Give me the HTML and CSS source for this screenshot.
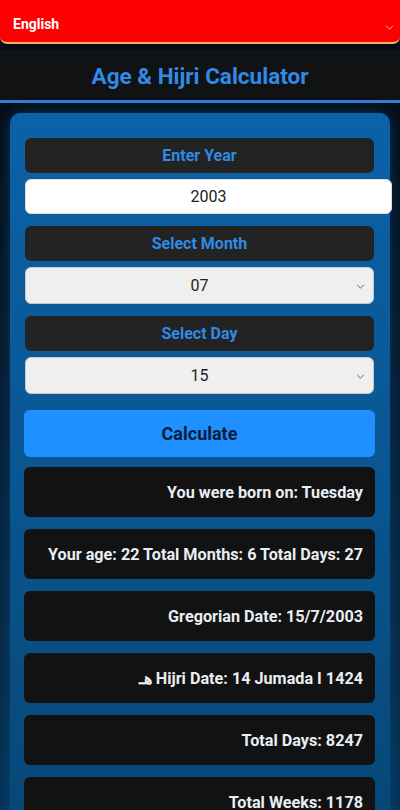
FILE: index.html
```html
<!DOCTYPE html>
<html lang="en">
<head>
  <meta charset="UTF-8" />
  <meta name="viewport" content="width=device-width, initial-scale=1" />
  <title>Age &amp; Hijri Calculator</title>
  <link rel="stylesheet" href="styles.css">
</head>
<body>
  <div class="lang-wrap">
    <select class="lang-select" id="langSelect">
      <option>English</option>
      <option>العربية</option>
    </select>
    <svg class="chev chev-lang" viewBox="0 0 10 6" width="9" height="5"><path d="M1 1l4 4 4-4" fill="none" stroke="#ffc2c2" stroke-width="1.2"/></svg>
  </div>

  <header class="top-bar">
    <h1>Age &amp; Hijri Calculator</h1>
  </header>

  <main class="card">
    <div class="field-label">Enter Year</div>
    <input class="year-input" type="text" id="year" value="2003">

    <div class="field-label">Select Month</div>
    <div class="select-wrap">
      <select id="month"><option>07</option></select>
      <svg class="chev" viewBox="0 0 10 6" width="9" height="5"><path d="M1 1l4 4 4-4" fill="none" stroke="#666" stroke-width="1.2"/></svg>
    </div>

    <div class="field-label">Select Day</div>
    <div class="select-wrap">
      <select id="day"><option>15</option></select>
      <svg class="chev" viewBox="0 0 10 6" width="9" height="5"><path d="M1 1l4 4 4-4" fill="none" stroke="#666" stroke-width="1.2"/></svg>
    </div>

    <button class="calc-btn" id="calcBtn">Calculate</button>

    <div class="results" dir="rtl">
      <div class="result">You were born on: Tuesday</div>
      <div class="result">Your age: 22 Total Months: 6 Total Days: 27</div>
      <div class="result">Gregorian Date: 15/7/2003</div>
      <div class="result">Hijri Date: 14 Jumada I 1424 هـ</div>
      <div class="result">Total Days: 8247</div>
      <div class="result">Total Weeks: 1178</div>
    </div>
  </main>
</body>
</html>
```

FILE: styles.css
```css
html, body {
  margin: 0;
  padding: 0;
}
body {
  font-family: Roboto, "Noto Sans", Arial, sans-serif;
  background: linear-gradient(180deg, #05090f 0%, #061a2c 40%, #06355a 100%);
  min-height: 100vh;
  overflow: hidden;
}
.lang-wrap {
  position: relative;
}
.lang-select {
  display: block;
  width: 100%;
  height: 44px;
  appearance: none;
  -webkit-appearance: none;
  background: #ff0000;
  color: #fff;
  font-family: inherit;
  font-size: 14px;
  font-weight: 700;
  border: none;
  border-bottom: 2px solid #f0b060;
  border-radius: 0 0 7px 7px;
  padding: 6px 13px 0;
  outline: none;
}
.chev {
  position: absolute;
  right: 9px;
  top: 50%;
  margin-top: -2px;
  pointer-events: none;
}
.chev-lang {
  right: 6px;
  margin-top: 3px;
}
.top-bar {
  margin-top: 6px;
  background: #111214;
  height: 50px;
  border-bottom: 3px solid #2f7fd8;
  display: flex;
  align-items: center;
  justify-content: center;
}
.top-bar h1 {
  margin: 0;
  font-size: 22.5px;
  font-weight: 700;
  color: #2f8be6;
  padding-top: 2px;
}
.card {
  margin: 10px 10px 0;
  padding: 25px 15px 20px 14px;
  border-radius: 10px;
  background: linear-gradient(180deg, #0b62a8 0%, #0a5794 45%, #074674 100%);
  box-shadow: 0 0 14px rgba(12, 90, 160, 0.45);
}
.field-label {
  background: #232323;
  color: #2f8be6;
  font-size: 16px;
  font-weight: 700;
  text-align: center;
  height: 35px;
  line-height: 36px;
  border-radius: 6px;
  margin: 0 1px 6px;
}
.year-input {
  display: block;
  box-sizing: border-box;
  width: calc(100% + 16px);
  margin: 0 0 12px 1px;
  height: 35px;
  border: 1px solid #ddd;
  border-radius: 6px;
  background: #fff;
  font-family: inherit;
  font-size: 16px;
  color: #222;
  text-align: center;
  outline: none;
}
.select-wrap {
  position: relative;
  margin: 0 1px 12px;
}
.select-wrap select {
  display: block;
  width: 100%;
  height: 37px;
  appearance: none;
  -webkit-appearance: none;
  background: #efefef;
  border: 1px solid #c8c8c8;
  border-radius: 6px;
  font-family: inherit;
  font-size: 16px;
  color: #222;
  text-align: center;
  text-align-last: center;
  outline: none;
}
.calc-btn {
  display: block;
  width: 100%;
  height: 47px;
  margin: 16px 0 10px;
  border: none;
  border-radius: 6px;
  background: #1e90ff;
  color: #0d1a38;
  font-family: inherit;
  font-size: 18px;
  font-weight: 700;
  cursor: pointer;
}
.results {
  display: flex;
  flex-direction: column;
  gap: 12px;
}
.result {
  background: #121212;
  color: #e9eef3;
  font-size: 16.2px;
  font-weight: 700;
  height: 50px;
  line-height: 52px;
  text-align: right;
  padding: 0 12px;
  border-radius: 6px;
  white-space: nowrap;
}
```
